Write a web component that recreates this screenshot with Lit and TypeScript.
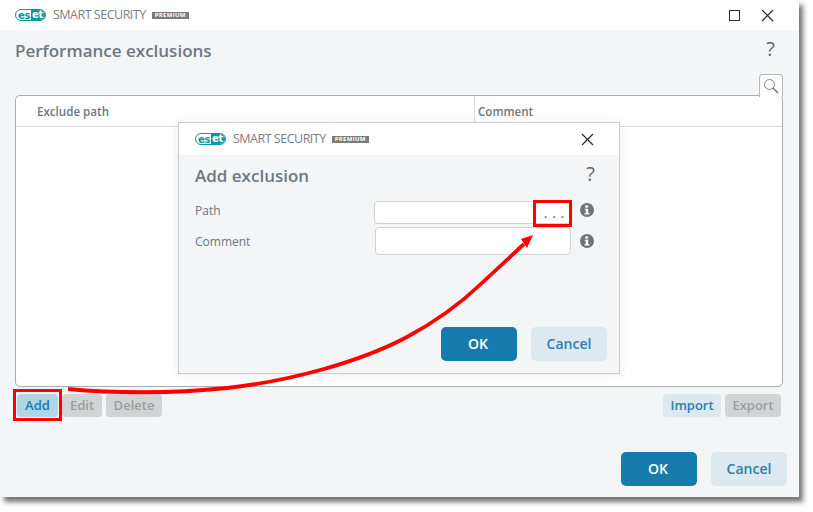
import { LitElement, html, css, svg } from "lit";
import { customElement } from "lit/decorators.js";

const logo = html`<div class="brand">
  <span class="eset"><span class="es">es</span><span class="et">et</span></span>
  <span class="ss">SMART SECURITY</span>
  <span class="prem">PREMIUM</span>
</div>`;

const info = html`<svg class="info" width="14" height="14" viewBox="0 0 14 14"><circle cx="7" cy="7" r="7" fill="#6f7479"/><rect x="5.2" y="2.4" width="3" height="2.2" fill="#fff"/><path d="M4.8 5.7h3.4v4.2h1.2v1.5H4.6V9.900h1.300V7.200H4.800z" fill="#fff"/></svg>`;

const closeX = svg`<path d="M1 1L12 12M12 1L1 12" stroke="#2b2b2b" stroke-width="1.200" fill="none"/>`;

@customElement("app-root")
export class AppRoot extends LitElement {
  static styles = css`
    :host { display: block; width: 813px; height: 512px; position: relative; background: #fff; overflow: hidden; font-family: "Open Sans", "Noto Sans", sans-serif; }
    .win { width: 799px; height: 497px; background: #f3f5f7; box-shadow: 4px 5px 5px rgba(70,70,70,.75); display: flex; flex-direction: column; }
    .titlebar { height: 30px; background: #fff; display: flex; align-items: center; padding-left: 15px; flex: none; }
    .brand { display: flex; align-items: center; }
    .eset { display: flex; align-items: center; height: 12px; width: 31px; border: 1.500px solid #0e97a0; border-radius: 6px; box-sizing: border-box; font: 700 10px/9px "DejaVu Sans", sans-serif; overflow: hidden; letter-spacing: -.2px; }
    .es { color: #0e97a0; padding-left: 2px; width: 13px; }
    .et { color: #fff; background: #0e97a0; flex: 1; height: 100%; padding-left: 1px; }
    .ss { font-size: 12.500px; letter-spacing: -.5px; color: #7b8087; margin-left: 7px; line-height: 14px; }
    .prem { background: #787d82; color: #fff; font-size: 6px; font-weight: 700; height: 7px; line-height: 7px; padding: 0 3px; margin-left: 6px; letter-spacing: .3px; }
    .winbtns { margin-left: auto; display: flex; align-items: center; gap: 21px; padding-right: 25px; }
    .sq { width: 9px; height: 9px; border: 1px solid #2b2b2b; }
    .heading { display: flex; justify-content: space-between; padding: 9px 24px 0 15px; height: 35px; box-sizing: border-box; flex: none; }
    h1 { margin: 0; font-size: 17px; font-weight: 600; color: #6e7781; line-height: 24px; }
    .help { font-size: 20px; color: #5d6670; line-height: 24px; margin-top: -2px; }
    .tabrow { display: flex; justify-content: flex-end; padding-right: 16px; height: 30px; flex: none; position: relative; z-index: 1; }
    .tabrow .tab { width: 22px; height: 22px; margin-top: 9px; background: #fff; border: 1px solid #b4b8bc; border-bottom: none; border-radius: 4px 4px 0 0; display: flex; align-items: center; justify-content: center; }
    .table { margin: 0 16px 0 15px; height: 292px; box-sizing: border-box; background: #fff; border: 1px solid #a9adb1; border-radius: 5px; flex: none; }
    .thead { height: 31px; box-sizing: border-box; border-bottom: 1px solid #d8dbde; display: flex; font-size: 11.600px; font-weight: 600; color: #6e7781; line-height: 32px; }
    .c1 { width: 459px; padding-left: 21px; box-sizing: border-box; border-right: 1px solid #d8dbde; }
    .c2 { padding-left: 3px; }
    .tools { display: flex; gap: 4px; padding: 7px 18px 0 17px; flex: none; }
    .b { height: 23px; border-radius: 4px; font-size: 13px; font-weight: 600; line-height: 23px; text-align: center; box-sizing: border-box; }
    .add { width: 41px; background: #b1d4e6; color: #1a7cb0; }
    .dis { background: #d2d3d4; color: #9b9ea1; }
    .light { background: #dde8ef; color: #2b80ae; }
    .spacer { flex: 1; }
    .foot { display: flex; justify-content: flex-end; gap: 14px; padding: 35px 12px 0 0; }
    .big { width: 76px; height: 34px; border-radius: 5px; font-size: 14px; line-height: 34px; text-align: center; font-weight: 600; }
    .ok { background: #187bad; color: #fff; padding-right: 2px; box-sizing: border-box; }
    .cancel { background: #dde8ef; color: #2b80ae; }
    .dialog { position: absolute; left: 178px; top: 122px; width: 442px; height: 252px; box-sizing: border-box; border: 1px solid #c9cbcd; background: #f3f5f7; box-shadow: 0 0 10px rgba(0,0,0,.08); display: flex; flex-direction: column; }
    .dhead { height: 32px; background: #fff; display: flex; align-items: center; padding-left: 16px; padding-right: 25px; flex: none; }
    .dhead svg { margin-left: auto; }
    .dtitle { display: flex; justify-content: space-between; padding: 9px 24px 0 16px; height: 38px; box-sizing: border-box; flex: none; }
    .dtitle h2 { margin: 0; font-size: 17px; font-weight: 600; color: #6e7781; line-height: 24px; }
    .form { display: grid; grid-template-columns: 179px 197px 24px; row-gap: 3px; padding: 8px 0 0 16px; align-items: center; }
    .lab { font-size: 12px; color: #6e7781; }
    .up { margin-bottom: 4px; }
    .upi { margin-bottom: 6px; }
    .inp { display: flex; height: 23px; background: #fff; border: 1px solid #cfd2d5; border-radius: 4px; box-sizing: border-box; width: 197px; }
    .inp.c { height: 28px; margin-left: 1px; width: 196px; }
    .dots { margin-left: auto; width: 36px; text-align: center; font-size: 13px; letter-spacing: 5px; color: #6e7781; line-height: 23px; font-weight: 600; padding-left: 9px; box-sizing: border-box; }
    .info { margin-left: 9px; display: block; }
    .dfoot { margin-top: auto; display: flex; justify-content: flex-end; gap: 14px; padding: 0 12px 12px 0; }
    .overlay { position: absolute; left: 0; top: 0; pointer-events: none; }
  `;

  render() {
    return html`
      <div class="win">
        <div class="titlebar">
          ${logo}
          <div class="winbtns">
            <div class="sq"></div>
            <svg width="13" height="13" viewBox="0 0 13 13">${closeX}</svg>
          </div>
        </div>
        <div class="heading"><h1>Performance exclusions</h1><div class="help">?</div></div>
        <div class="tabrow">
          <div class="tab"><svg width="16" height="16" viewBox="0 0 16 16"><circle cx="6.500" cy="6.500" r="5" fill="none" stroke="#7c8186" stroke-width="1"/><path d="M10 10l5 5" stroke="#5f6469" stroke-width="1.200"/></svg></div>
        </div>
        <div class="table">
          <div class="thead"><div class="c1">Exclude path</div><div class="c2">Comment</div></div>
        </div>
        <div class="tools">
          <div class="b add">Add</div>
          <div class="b dis" style="width:40px">Edit</div>
          <div class="b dis" style="width:56px">Delete</div>
          <div class="spacer"></div>
          <div class="b light" style="width:58px">Import</div>
          <div class="b dis" style="width:56px">Export</div>
        </div>
        <div class="foot">
          <div class="big ok">OK</div>
          <div class="big cancel">Cancel</div>
        </div>
      </div>

      <div class="dialog">
        <div class="dhead">
          ${logo}
          <svg width="13" height="13" viewBox="0 0 13 13">${closeX}</svg>
        </div>
        <div class="dtitle"><h2>Add exclusion</h2><div class="help">?</div></div>
        <div class="form">
          <div class="lab up">Path</div>
          <div class="inp"><div class="dots">...</div></div>
          <div class="upi">${info}</div>
          <div class="lab">Comment</div>
          <div class="inp c"></div>
          ${info}
        </div>
        <div class="dfoot">
          <div class="big ok">OK</div>
          <div class="big cancel">Cancel</div>
        </div>
      </div>

      <svg class="overlay" width="813" height="512" viewBox="0 0 813 512">
        <rect x="14.500" y="390.500" width="46" height="29" fill="none" stroke="#f00" stroke-width="3"/>
        <rect x="534.500" y="201.500" width="36" height="24" fill="none" stroke="#f00" stroke-width="3"/>
        <path d="M68 389C110 393 170 394 227 388C290 381 360 362 407 337C435 322 460 304 482 283L524 244" fill="none" stroke="#f00" stroke-width="3.800"/>
        <path d="M533 235L527 248L521 239Z" fill="#f00"/>
      </svg>
    `;
  }
}
